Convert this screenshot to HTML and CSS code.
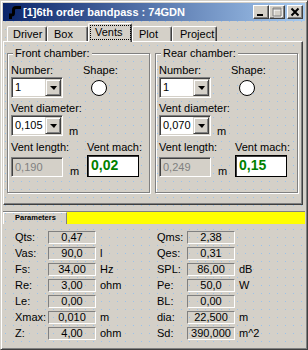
FILE: index.html
```html
<!DOCTYPE html>
<html lang="en">
<head>
    <meta charset="UTF-8">
    <title>6th order bandpass</title>
    <link rel="stylesheet" href="styles.css">
</head>
<body>
    <div class="window">
        <div class="titlebar">
            <svg class="app-icon" width="16" height="16" viewBox="0 0 16 16">
                <path d="M15 3.5 H10 Q7.5 3.5 7.5 6 V9 Q7.5 11 5.5 11 H4.5 V15" fill="none" stroke="#000" stroke-width="3"/>
            </svg>
            <span class="title">[1]6th order bandpass : 74GDN</span>
            <div class="caption-btns">
                <span class="cbtn">
                    <svg width="14" height="12" viewBox="0 0 14 12"><rect x="3" y="8" width="6" height="2" fill="#000"/></svg>
                </span>
                <span class="cbtn">
                    <svg width="14" height="12" viewBox="0 0 14 12">
                        <path d="M4 3 H12 V11 H4 Z M4 4 H12" fill="none" stroke="#fff"/>
                        <path d="M3 2 H11 V10 H3 Z M3 3 H11" fill="none" stroke="#808080"/>
                    </svg>
                </span>
                <span class="cbtn close">
                    <svg width="14" height="12" viewBox="0 0 14 12"><path d="M3.5 2.5 L10.5 9.5 M10.5 2.5 L3.5 9.5" stroke="#000" stroke-width="2"/></svg>
                </span>
            </div>
        </div>

        <div class="tabs">
            <div class="tab t-driver">Driver</div>
            <div class="tab t-box">Box</div>
            <div class="tab t-vents active"><span class="focus">Vents</span></div>
            <div class="tab t-plot">Plot</div>
            <div class="tab t-project">Project</div>
        </div>

        <section class="sheet">
            <div class="group">
                <span class="group-label">Front chamber:</span>
                <div class="row">
                    <span class="w-number">Number:</span>
                    <span>Shape:</span>
                </div>
                <div class="row center">
                    <div class="combo"><span class="combo-text">1</span><span class="drop"></span></div>
                    <span class="shape"></span>
                </div>
                <div class="label-diam">Vent diameter:</div>
                <div class="row bottom">
                    <div class="combo"><span class="combo-text">0,105</span><span class="drop"></span></div>
                    <span class="unit-m">m</span>
                </div>
                <div class="row labels-len">
                    <span class="w-length">Vent length:</span>
                    <span>Vent mach:</span>
                </div>
                <div class="row">
                    <div class="len-cell">
                        <div class="edit disabled">0,190</div>
                        <span class="unit-m2">m</span>
                    </div>
                    <div class="mach">0,02</div>
                </div>
            </div>

            <div class="group">
                <span class="group-label">Rear chamber:</span>
                <div class="row">
                    <span class="w-number">Number:</span>
                    <span>Shape:</span>
                </div>
                <div class="row center">
                    <div class="combo"><span class="combo-text">1</span><span class="drop"></span></div>
                    <span class="shape"></span>
                </div>
                <div class="label-diam">Vent diameter:</div>
                <div class="row bottom">
                    <div class="combo"><span class="combo-text">0,070</span><span class="drop"></span></div>
                    <span class="unit-m">m</span>
                </div>
                <div class="row labels-len">
                    <span class="w-length">Vent length:</span>
                    <span>Vent mach:</span>
                </div>
                <div class="row">
                    <div class="len-cell">
                        <div class="edit disabled">0,249</div>
                        <span class="unit-m2">m</span>
                    </div>
                    <div class="mach">0,15</div>
                </div>
            </div>
        </section>

        <div class="parambar">
            <span class="param-title">Parameters</span>
            <span class="param-fill"></span>
        </div>

        <div class="params">
            <div class="pcol">
                <div class="prow"><span class="plabel">Qts:</span><span class="pfield">0,47</span></div>
                <div class="prow"><span class="plabel">Vas:</span><span class="pfield">90,0</span><span class="punit">l</span></div>
                <div class="prow"><span class="plabel">Fs:</span><span class="pfield">34,00</span><span class="punit">Hz</span></div>
                <div class="prow"><span class="plabel">Re:</span><span class="pfield">3,00</span><span class="punit">ohm</span></div>
                <div class="prow"><span class="plabel">Le:</span><span class="pfield">0,00</span></div>
                <div class="prow"><span class="plabel">Xmax:</span><span class="pfield">0,010</span><span class="punit">m</span></div>
                <div class="prow"><span class="plabel">Z:</span><span class="pfield">4,00</span><span class="punit">ohm</span></div>
            </div>
            <div class="pcol right">
                <div class="prow"><span class="plabel">Qms:</span><span class="pfield">2,38</span></div>
                <div class="prow"><span class="plabel">Qes:</span><span class="pfield">0,31</span></div>
                <div class="prow"><span class="plabel">SPL:</span><span class="pfield">86,00</span><span class="punit">dB</span></div>
                <div class="prow"><span class="plabel">Pe:</span><span class="pfield">50,0</span><span class="punit">W</span></div>
                <div class="prow"><span class="plabel">BL:</span><span class="pfield">0,00</span></div>
                <div class="prow"><span class="plabel">dia:</span><span class="pfield">22,500</span><span class="punit">m</span></div>
                <div class="prow"><span class="plabel">Sd:</span><span class="pfield">390,000</span><span class="punit">m^2</span></div>
            </div>
        </div>
    </div>
</body>
</html>
```

FILE: styles.css
```css
html, body {
    margin: 0;
    padding: 0;
}

body {
    background: #d4d0c8;
    font-family: "Liberation Sans", Arial, sans-serif;
    font-size: 11px;
    line-height: 13px;
    color: #000;
}

.window {
    width: 308px;
    height: 350px;
    box-sizing: border-box;
    padding: 2px;
    border: 1px solid;
    border-color: #d4d0c8 #404040 #404040 #d4d0c8;
    box-shadow: inset 1px 1px #fff, inset -1px -1px #808080;
    overflow: hidden;
    /* design-time dot grid */
    background-color: #d4d0c8;
    background-image:
        linear-gradient(to right, #d4d0c8 7px, transparent 7px),
        linear-gradient(to bottom, #d4d0c8 7px, #98c2ec 7px);
    background-size: 8px 8px;
    background-position: 5px 5px;
}

/* title bar */
.titlebar {
    height: 18px;
    display: flex;
    align-items: center;
    padding: 0 2px 0 3px;
    background: linear-gradient(to right, #0a246a, #a6caf0);
    color: #fff;
    font-weight: bold;
}

.app-icon {
    flex: none;
}

.title {
    margin-left: 1px;
    white-space: nowrap;
}

.caption-btns {
    margin-left: auto;
    display: flex;
}

.cbtn {
    width: 16px;
    height: 14px;
    box-sizing: border-box;
    background: #d4d0c8;
    border: 1px solid;
    border-color: #fff #404040 #404040 #fff;
    box-shadow: inset -1px -1px #808080;
    display: flex;
}

.cbtn svg {
    display: block;
}

.cbtn.close {
    margin-left: 2px;
}

/* tabs */
.tabs {
    height: 20px;
    display: flex;
    align-items: flex-end;
    padding-left: 4px;
    position: relative;
    z-index: 1;
}

.tab {
    height: 15px;
    box-sizing: border-box;
    padding: 1px 0 0 6px;
    background: #d4d0c8;
    border: 1px solid;
    border-bottom: none;
    border-color: #fff #404040 #404040 #fff;
    border-radius: 2px 2px 0 0;
    box-shadow: inset -1px 0 #808080;
}

.t-driver { width: 40px; padding-left: 5px; }
.t-box { width: 41px; }
.t-plot { width: 40px; }
.t-project { width: 45px; padding-left: 7px; }

.tab.active {
    width: 44px;
    height: 19px;
    margin-bottom: -1px;
    padding: 1px 0 0 1px;
}

.focus {
    display: block;
    width: 41px;
    height: 15px;
    box-sizing: border-box;
    padding: 1px 0 0 5px;
    outline: 1px dotted #000;
    outline-offset: -1px;
}

/* tab sheet */
.sheet {
    height: 164px;
    margin-right: 2px;
    box-sizing: border-box;
    border: 1px solid;
    border-color: #fff #404040 #404040 #fff;
    box-shadow: inset -1px -1px #808080;
    display: flex;
    gap: 5px;
    padding: 11px 0 0 3px;
}

.group {
    position: relative;
    width: 143px;
    height: 140px;
    box-sizing: border-box;
    border: 1px solid #808080;
    box-shadow: inset 1px 1px #fff, 1px 1px #fff;
    padding: 10px 0 0 3px;
}

.group-label {
    position: absolute;
    top: -7px;
    left: 5px;
    padding: 0 2px;
    background: #d4d0c8;
}

.row {
    display: flex;
}

.row.center {
    align-items: center;
}

.row.bottom {
    align-items: flex-end;
}

.w-number {
    width: 72px;
}

.w-length {
    width: 76px;
}

.label-diam {
    margin-top: 4px;
}

.labels-len {
    margin-top: 5px;
}

/* combo box */
.combo {
    width: 52px;
    height: 21px;
    box-sizing: border-box;
    background: #fff;
    border: 1px solid;
    border-color: #808080 #fff #fff #808080;
    box-shadow: inset 1px 1px #404040, inset -1px -1px #d4d0c8;
    padding: 1px;
    display: flex;
    align-items: center;
}

.combo-text {
    flex: 1;
    padding-left: 2px;
}

.drop {
    width: 16px;
    height: 17px;
    box-sizing: border-box;
    background: #d4d0c8;
    border: 1px solid;
    border-color: #d4d0c8 #404040 #404040 #d4d0c8;
    box-shadow: inset 1px 1px #fff, inset -1px -1px #808080;
    display: flex;
    align-items: center;
    justify-content: center;
}

.drop::after {
    content: "";
    border-top: 4px solid #000;
    border-left: 4px solid transparent;
    border-right: 3px solid transparent;
    margin-top: 1px;
}

.shape {
    width: 16px;
    height: 16px;
    box-sizing: border-box;
    margin-left: 28px;
    border: 1px solid #000;
    border-radius: 50%;
    background: #fff;
}

.unit-m {
    margin: 0 0 -2px 6px;
}

/* vent length / mach */
.len-cell {
    width: 76px;
    display: flex;
    align-items: flex-end;
    padding-top: 1px;
}

.edit {
    width: 52px;
    height: 20px;
    box-sizing: border-box;
    border: 1px solid;
    border-color: #808080 #fff #fff #808080;
    box-shadow: inset 1px 1px #404040, inset -1px -1px #d4d0c8;
    padding: 3px 0 0 3px;
}

.edit.disabled {
    color: #808080;
    background: #d4d0c8;
}

.unit-m2 {
    margin: 0 0 -1px 7px;
}

.mach {
    width: 52px;
    height: 22px;
    box-sizing: border-box;
    margin-top: 1px;
    border: 1px solid #000;
    box-shadow: inset 1px 1px #404040;
    background: #fff;
    color: #008000;
    font-weight: bold;
    font-size: 14px;
    line-height: 16px;
    padding: 1px 0 0 3px;
}

/* parameters strip */
.parambar {
    margin-top: 6px;
    height: 12px;
    display: flex;
    border-top: 1px solid #808080;
}

.param-title {
    width: 64px;
    box-sizing: border-box;
    border-top: 1px solid #fff;
    border-left: 1px solid #fff;
    border-right: 1px solid #808080;
    font-size: 7.5px;
    font-weight: bold;
    line-height: 10px;
    padding-left: 11px;
}

.param-fill {
    flex: 1;
    background: #ffff00;
}

.params {
    display: flex;
    padding-left: 12px;
    margin-top: 7px;
}

.pcol {
    width: 142px;
}

.prow {
    display: flex;
    align-items: center;
    height: 13px;
    margin-bottom: 3px;
}

.plabel {
    width: 33px;
}

.pcol.right .plabel {
    width: 30px;
}

.pfield {
    width: 48px;
    height: 13px;
    box-sizing: border-box;
    border: 1px solid;
    border-color: #808080 #fff #fff #808080;
    text-align: center;
    line-height: 11px;
}

.punit {
    margin-left: 4px;
}
```
